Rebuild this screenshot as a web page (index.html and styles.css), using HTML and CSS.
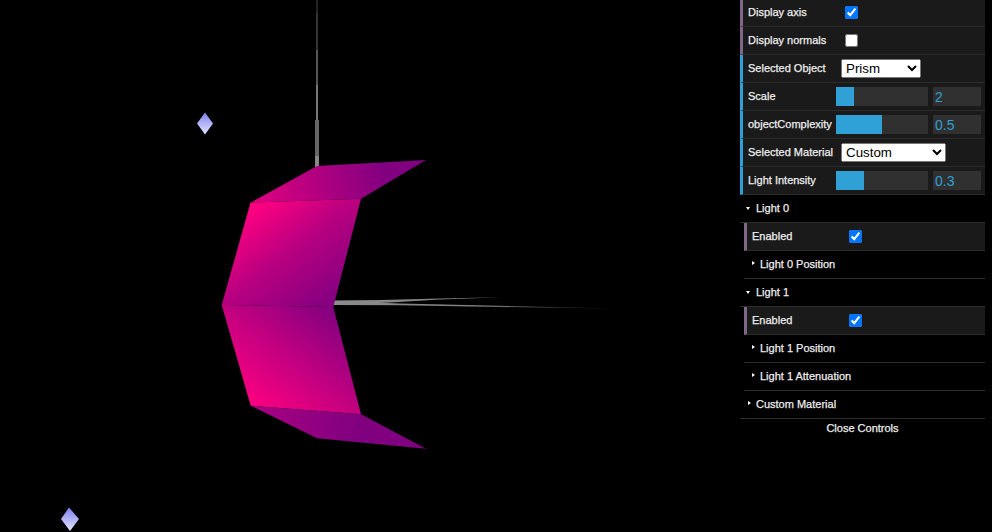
FILE: index.html
```html
<!DOCTYPE html>
<html lang="en">

<head>
    <meta charset="UTF-8">
    <title>Prism scene</title>
    <link rel="stylesheet" href="styles.css">
</head>

<body>
    <svg class="scene" width="992" height="532" viewBox="0 0 992 532">
        <defs>
            <linearGradient id="upperPanel" gradientUnits="userSpaceOnUse" x1="255" y1="205" x2="333" y2="307">
                <stop offset="0" stop-color="#ff0080"></stop>
                <stop offset="0.45" stop-color="#b80080"></stop>
                <stop offset="1" stop-color="#800080"></stop>
            </linearGradient>
            <linearGradient id="lowerPanel" gradientUnits="userSpaceOnUse" x1="256" y1="404" x2="333" y2="307">
                <stop offset="0" stop-color="#f80080"></stop>
                <stop offset="0.45" stop-color="#c40080"></stop>
                <stop offset="1" stop-color="#800080"></stop>
            </linearGradient>
            <linearGradient id="upperFlap" gradientUnits="userSpaceOnUse" x1="262" y1="205" x2="385" y2="168">
                <stop offset="0" stop-color="#dc0080"></stop>
                <stop offset="1" stop-color="#800080"></stop>
            </linearGradient>
            <linearGradient id="lowerFlap" gradientUnits="userSpaceOnUse" x1="255" y1="405" x2="360" y2="430">
                <stop offset="0" stop-color="#a80080"></stop>
                <stop offset="1" stop-color="#800080"></stop>
            </linearGradient>
            <linearGradient id="axisFade" gradientUnits="userSpaceOnUse" x1="333" y1="0" x2="612" y2="0">
                <stop offset="0" stop-color="#8c8c8c"></stop>
                <stop offset="0.5" stop-color="#808080"></stop>
                <stop offset="1" stop-color="#222"></stop>
            </linearGradient>
            <linearGradient id="lightFill" x1="0" y1="0" x2="0" y2="1">
                <stop offset="0" stop-color="#7f7fee"></stop>
                <stop offset="1" stop-color="#e4e4ff"></stop>
            </linearGradient>
        </defs>

        <!-- axes -->
        <rect x="316" y="0" width="2" height="13" fill="#222"></rect>
        <rect x="316" y="13" width="2" height="37" fill="#333"></rect>
        <rect x="316" y="50" width="2" height="35" fill="#555"></rect>
        <rect x="316" y="85" width="2" height="35" fill="#777"></rect>
        <rect x="315" y="120" width="4" height="36" fill="#666"></rect>
        <rect x="315" y="156" width="4" height="11" fill="#888"></rect>
        <polygon points="333,300.4 380,300 440,298.6 502,297.2 440,299.6 390,302.6 333,305" fill="url(#axisFade)"></polygon>
        <polygon points="333,301 400,303.4 500,305.8 612,308.6 500,307 400,305.2 333,305" fill="url(#axisFade)"></polygon>

        <!-- prism -->
        <polygon points="317,166 426,160 361,198.7 250.5,202.7" fill="url(#upperFlap)"></polygon>
        <polygon points="250.5,202.7 361,198.7 333.3,307 221.7,305" fill="url(#upperPanel)"></polygon>
        <polygon points="221.7,305 333.3,307 361,414.3 250.7,405.7" fill="url(#lowerPanel)"></polygon>
        <polygon points="250.7,405.7 361,414.3 426,448.7 317,438.3" fill="url(#lowerFlap)"></polygon>

        <!-- lights -->
        <polygon points="205,112.5 213,123.5 205,134.5 197,123.5" fill="url(#lightFill)"></polygon>
        <polygon points="69,507.5 79,519 70,531 61,519" fill="url(#lightFill)"></polygon>
    </svg>

    <div class="gui">
        <ul class="root">
            <li class="row bool">
                <span class="name">Display axis</span>
                <div class="ctrl"><input type="checkbox" checked></div>
            </li>
            <li class="row bool">
                <span class="name">Display normals</span>
                <div class="ctrl"><input type="checkbox"></div>
            </li>
            <li class="row num">
                <span class="name">Selected Object</span>
                <div class="ctrl">
                    <select class="sel-object">
                        <option>Prism</option>
                    </select>
                </div>
            </li>
            <li class="row num">
                <span class="name">Scale</span>
                <div class="ctrl slider-ctrl">
                    <div class="slider"><div class="fg" style="width: 18px"></div></div>
                    <input class="val" type="text" value="2">
                </div>
            </li>
            <li class="row num">
                <span class="name">objectComplexity</span>
                <div class="ctrl slider-ctrl">
                    <div class="slider"><div class="fg" style="width: 46px"></div></div>
                    <input class="val" type="text" value="0.5">
                </div>
            </li>
            <li class="row num">
                <span class="name">Selected Material</span>
                <div class="ctrl">
                    <select class="sel-material">
                        <option>Custom</option>
                    </select>
                </div>
            </li>
            <li class="row num">
                <span class="name">Light Intensity</span>
                <div class="ctrl slider-ctrl">
                    <div class="slider"><div class="fg" style="width: 28px"></div></div>
                    <input class="val" type="text" value="0.3">
                </div>
            </li>

            <li class="title open">Light 0</li>
            <li>
                <ul class="sub">
                    <li class="row bool">
                        <span class="name">Enabled</span>
                        <div class="ctrl"><input type="checkbox" checked></div>
                    </li>
                    <li class="title">Light 0 Position</li>
                </ul>
            </li>

            <li class="title open">Light 1</li>
            <li>
                <ul class="sub">
                    <li class="row bool">
                        <span class="name">Enabled</span>
                        <div class="ctrl"><input type="checkbox" checked></div>
                    </li>
                    <li class="title">Light 1 Position</li>
                    <li class="title">Light 1 Attenuation</li>
                </ul>
            </li>

            <li class="title">Custom Material</li>
        </ul>
        <div class="close">Close Controls</div>
    </div>
</body>

</html>
```

FILE: styles.css
```css
body {
    margin: 0;
    background: #000;
    overflow: hidden;
}

.scene {
    display: block;
}

.gui {
    position: absolute;
    top: -1px;
    right: 7px;
    width: 245px;
    font: 11px "Liberation Sans", Arial, sans-serif;
    color: #eee;
    -webkit-text-stroke: 0.25px #eee;
}

.gui ul {
    list-style: none;
    margin: 0;
    padding: 0;
}

.sub {
    margin-left: 4px !important;
}

.row {
    display: flex;
    align-items: center;
    box-sizing: border-box;
    height: 28px;
    padding: 0 4px 0 5px;
    background: #1a1a1a;
    border-left: 3px solid #806787;
    border-bottom: 1px solid #2c2c2c;
}

.row.num {
    border-left-color: #2fa1d6;
}

.name {
    flex: none;
    width: 88px;
    padding-bottom: 2px;
    white-space: nowrap;
}

.ctrl {
    flex: 1;
    display: flex;
    align-items: center;
}

.ctrl input[type="checkbox"] {
    margin: 0 0 0 9px;
    width: 13px;
    height: 13px;
}

.ctrl select {
    margin-left: 5px;
    height: 19px;
    font-family: "Liberation Sans", Arial, sans-serif;
    font-size: 13.33px;
    -webkit-text-stroke: 0;
}

.sel-object {
    width: 80px;
}

.sel-material {
    width: 105px;
}

.slider-ctrl {
    gap: 5px;
}

.slider {
    width: 92px;
    height: 19px;
    background: #303030;
}

.fg {
    height: 100%;
    background: #2fa1d6;
}

.val {
    box-sizing: border-box;
    width: 48px;
    height: 19px;
    padding: 2px;
    border: 0;
    outline: 0;
    background: #303030;
    color: #2fa1d6;
    font: 14px "Liberation Sans", Arial, sans-serif;
    -webkit-text-stroke: 0;
}

.title {
    position: relative;
    box-sizing: border-box;
    height: 28px;
    line-height: 27px;
    padding-left: 16px;
    background: #000;
    border-bottom: 1px solid #2c2c2c;
}

.title::before {
    content: "";
    position: absolute;
    left: 8px;
    top: 10px;
    border-style: solid;
    border-width: 2.5px 0 2.5px 3px;
    border-color: transparent transparent transparent #fff;
}

.title.open::before {
    left: 6px;
    top: 12px;
    border-width: 3px 2.5px 0 2.5px;
    border-color: #fff transparent transparent transparent;
}

.close {
    height: 20px;
    line-height: 18px;
    text-align: center;
}
```
